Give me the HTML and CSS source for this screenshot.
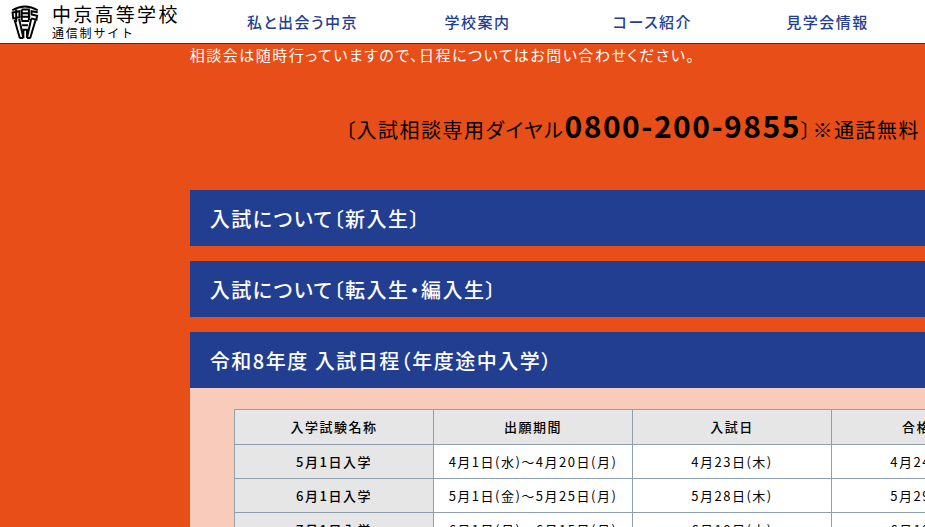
FILE: index.html
```html
<!DOCTYPE html>
<html lang="ja">
<head>
    <meta charset="UTF-8">
    <meta name="viewport" content="width=device-width, initial-scale=1.0">
    <title>入試情報 | 中京高等学校 通信制サイト</title>
    <link rel="stylesheet" href="styles.css">
</head>
<body>
    <header class="header">
        <a class="logo" href="#">
            <svg class="logo-mark" viewBox="0 0 84 104" fill="none" stroke="#000" stroke-width="6" aria-hidden="true">
                <path d="M3 16 Q42 -7 81 16"/>
                <path d="M4 23 L25 19 V37 L6 41 Z M15 14 V52"/>
                <path d="M32 14 H54 V47 M32 14 V47 M32 25 H54 M28 36 H58"/>
                <path d="M81 22 L62 19 V29 L79 33 L77 45 L61 41"/>
                <path d="M10 45 L26 101 M24 42 L37 101 M74 47 L58 101 M61 42 L48 101"/>
                <path d="M31 49 H54 M33 62 H51 M37 101 V76 H48 V101 M25 101 H37 M48 101 H59"/>
            </svg>
            <span class="logo-text">
                <span class="logo-name">中京高等学校</span>
                <span class="logo-sub">通信制サイト</span>
            </span>
        </a>
        <nav class="nav">
            <a href="#">私と出会う中京</a>
            <a href="#">学校案内</a>
            <a href="#">コース紹介</a>
            <a href="#">見学会情報</a>
        </nav>
    </header>

    <main class="container">
        <p class="lead">相談会は随時行っていますので、日程についてはお問い合わせください。</p>
        <p class="dial">〔入試相談専用ダイヤル<strong>0800-200-9855</strong>〕※通話無料</p>

        <div class="accordion">
            <button type="button" class="accordion-title">入試について〔新入生〕</button>
            <button type="button" class="accordion-title">入試について〔転入生・編入生〕</button>
            <section>
                <button type="button" class="accordion-title" aria-expanded="true" aria-controls="schedule">令和8年度 入試日程（年度途中入学）</button>
                <div class="accordion-body" id="schedule">
                    <table class="schedule">
                        <thead>
                            <tr>
                                <th scope="col">入学試験名称</th>
                                <th scope="col">出願期間</th>
                                <th scope="col">入試日</th>
                                <th scope="col">合格発表</th>
                            </tr>
                        </thead>
                        <tbody>
                            <tr>
                                <th scope="row">5月1日入学</th>
                                <td>4月1日(水)〜4月20日(月)</td>
                                <td>4月23日(木)</td>
                                <td>4月24日(金)</td>
                            </tr>
                            <tr>
                                <th scope="row">6月1日入学</th>
                                <td>5月1日(金)〜5月25日(月)</td>
                                <td>5月28日(木)</td>
                                <td>5月29日(金)</td>
                            </tr>
                            <tr>
                                <th scope="row">7月1日入学</th>
                                <td>6月1日(月)〜6月15日(月)</td>
                                <td>6月18日(木)</td>
                                <td>6月19日(金)</td>
                            </tr>
                        </tbody>
                    </table>
                </div>
            </section>
        </div>
    </main>
</body>
</html>
```

FILE: styles.css
```css
* {
    box-sizing: border-box;
}

html {
    overflow: hidden;
}

body {
    margin: 0;
    min-width: 1265px;
    background-color: #e84e18;
    color: #000;
    font-family: "Noto Sans CJK JP", sans-serif;
    font-size: 15px;
    font-feature-settings: "palt";
    letter-spacing: 0.1em;
}

/* header */
.header {
    display: flex;
    align-items: center;
    height: 44px;
    background-color: #fff;
    border-bottom: 1px solid #2b3a55;
}

.logo {
    display: flex;
    align-items: center;
    gap: 13px;
    width: 215px;
    padding-left: 11px;
    color: #000;
    text-decoration: none;
}

.logo-mark {
    width: 28px;
    height: 34px;
}

.logo-name,
.logo-sub {
    display: block;
}

.logo-name {
    font-size: 19px;
    line-height: 22px;
    letter-spacing: 0.12em;
}

.logo-sub {
    font-size: 12px;
    font-feature-settings: normal;
    line-height: 16px;
    letter-spacing: 0.15em;
}

.nav {
    display: grid;
    grid-template-columns: repeat(4, 175px);
    text-align: center;
}

.nav a {
    color: #223e90;
    font-weight: 500;
    text-decoration: none;
}

/* main */
.container {
    width: 70%;
    margin: 0 auto;
}

.lead {
    margin: 0 0 39px;
    color: #fff;
    line-height: 22px;
}

.dial {
    margin: 0 0 40px;
    font-size: 20px;
    line-height: 40px;
    text-align: center;
    white-space: nowrap;
}

.dial strong {
    font-size: 30px;
}

.accordion {
    display: grid;
    gap: 15px;
}

.accordion-title {
    display: block;
    width: 100%;
    height: 56px;
    padding: 0 20px;
    border: none;
    background-color: #223e90;
    color: #fff;
    font: inherit;
    font-size: 20px;
    font-weight: 500;
    letter-spacing: inherit;
    text-align: left;
    cursor: pointer;
}

.accordion-body {
    padding: 21px 5%;
    background-color: #f8cbba;
}

.schedule {
    width: 100%;
    table-layout: fixed;
    border-collapse: collapse;
    background-color: #fff;
    font-size: 13px;
    line-height: 19px;
    text-align: center;
}

.schedule th,
.schedule td {
    padding: 7px 0;
    border: 1px solid #8ca0b0;
}

.schedule th {
    background-color: #e6e6e6;
    font-weight: 500;
}

.schedule thead th {
    padding-bottom: 8px;
}
```
